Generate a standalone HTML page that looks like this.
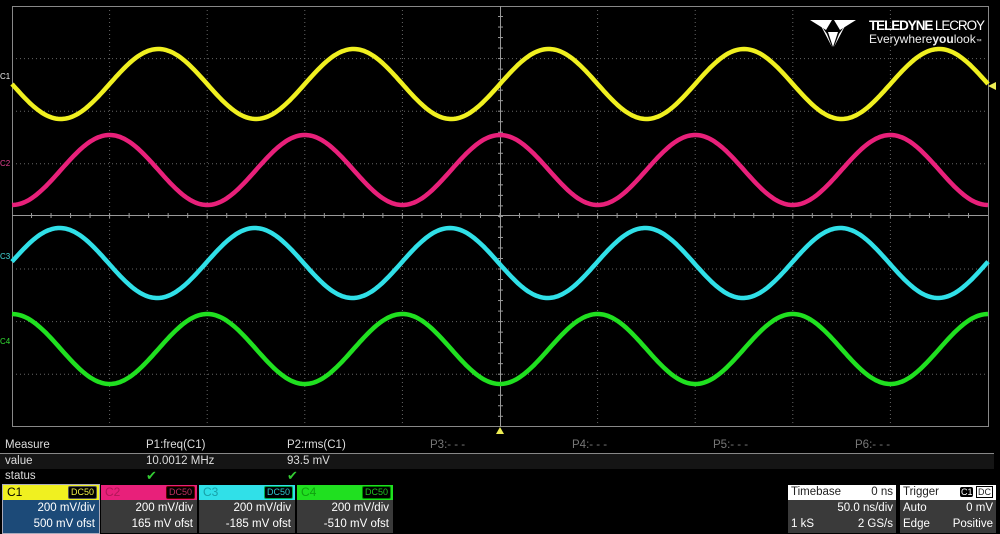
<!DOCTYPE html>
<html><head><style>
body{margin:0;width:1000px;height:534px;background:#000;overflow:hidden;font-family:"Liberation Sans",sans-serif;position:relative}
.t{position:absolute;font-size:11.5px;color:#ddd;white-space:nowrap}
.ch{position:absolute;top:485px;width:96px;height:48px;background:#3a3a3a}
.ch .h{height:15px;font-size:12px;line-height:15px;padding-left:4px;position:relative}
.ch .h b{position:absolute;right:2px;top:1px;font-weight:normal;font-size:9px;line-height:11px;padding:0 2px;border:1px solid #888;border-radius:2px;background:#000}
.ch .v{text-align:right;font-size:11.5px;line-height:16px;color:#fff;padding-right:4px}
</style></head><body>
<svg width="1000" height="534" style="position:absolute;left:0;top:0">
<g id="grid" stroke="#666" stroke-width="1" stroke-dasharray="1,3"></g>
<rect x="12.5" y="6.5" width="976" height="420" fill="none" stroke="#888"/>
<line x1="12" y1="215.5" x2="988" y2="215.5" stroke="#999"/>
<line x1="500.5" y1="6" x2="500.5" y2="427" stroke="#999"/>
<g id="ticks" stroke="#999"></g>
<g id="waves" fill="none" stroke-width="4.5"></g>
<polygon points="496,434 504,434 500,427" fill="#ee5"/>
<polygon points="988,86 996,82 996,90" fill="#ee5"/>
<text x="0" y="79" fill="#eee" font-size="8" font-family="Liberation Sans">C1</text>
<text x="0" y="166" fill="#e04090" font-size="8" font-family="Liberation Sans">C2</text>
<text x="0" y="259" fill="#4dd" font-size="8" font-family="Liberation Sans">C3</text>
<text x="0" y="344" fill="#3d3" font-size="8" font-family="Liberation Sans">C4</text>
<g fill="#fff"><polygon points="810,20 832,20 826,30"/><polygon points="834,20 856,20 840,30"/><polygon points="828,32 838,32 833,47"/><polygon points="820,24 827,34 832,47"/><polygon points="846,24 839,34 834,47"/></g>
<text x="869" y="30" fill="#fff" font-size="13.5" font-weight="bold" font-family="Liberation Sans" textLength="116">TELEDYNE <tspan font-weight="normal">LECROY</tspan></text>
<text x="869" y="43" fill="#eee" font-size="12" font-family="Liberation Sans">Everywhere<tspan font-weight="bold">you</tspan>look<tspan font-size="6">™</tspan></text>
</svg>
<script>
var g=document.getElementById('grid'),s='';
for(var i=1;i<10;i++){var x=12+i*97.6;if(i!=5)s+='<line x1="'+x+'" y1="6" x2="'+x+'" y2="427"/>';}
for(var j=1;j<8;j++){var y=6+j*52.6;if(j!=4)s+='<line x1="12" y1="'+y+'" x2="988" y2="'+y+'"/>';}
g.innerHTML=s;
var t='';
for(var k=1;k<50;k++){var x=12+k*19.52;t+='<line x1="'+x+'" y1="213" x2="'+x+'" y2="218"/>';}
for(var k=1;k<40;k++){var y=6+k*10.52;t+='<line x1="498" y1="'+y+'" x2="503" y2="'+y+'"/>';}
document.getElementById('ticks').innerHTML=t;
function w(c,f){var p='';for(var x=12;x<=988;x+=2)p+=x+','+f(x).toFixed(1)+' ';return '<polyline stroke="'+c+'" points="'+p+'"/>';}
var P=195.2,T=2*Math.PI;
document.getElementById('waves').innerHTML=
w('#f0f020',function(x){return 84+35*Math.sin(T*(x-12)/P)})+
w('#e8207a',function(x){return 170+35*Math.cos(T*(x-12)/P)})+
w('#30e0e8',function(x){return 263-35*Math.cos(T*(x-450)/P)})+
w('#20e020',function(x){return 349+35*Math.cos(T*(x-500)/P)});
</script>
<div class="t" style="left:5px;top:439px">Measure</div>
<div class="t" style="left:146px;top:439px">P1:freq(C1)</div>
<div class="t" style="left:287px;top:439px">P2:rms(C1)</div>
<div class="t" style="left:430px;top:439px;color:#777">P3:- - -</div>
<div class="t" style="left:572px;top:439px;color:#777">P4:- - -</div>
<div class="t" style="left:713px;top:439px;color:#777">P5:- - -</div>
<div class="t" style="left:855px;top:439px;color:#777">P6:- - -</div>
<div style="position:absolute;left:0;top:453px;width:994px;height:1px;background:#888"></div>
<div style="position:absolute;left:0;top:454px;width:994px;height:15px;background:#151515"></div>
<div class="t" style="left:5px;top:455px">value</div>
<div class="t" style="left:146px;top:455px">10.0012 MHz</div>
<div class="t" style="left:287px;top:455px">93.5 mV</div>
<div class="t" style="left:5px;top:470px">status</div>
<div class="t" style="left:146px;top:468px;color:#3c3;font-size:13px">✔</div>
<div class="t" style="left:287px;top:468px;color:#3c3;font-size:13px">✔</div>
<div class="ch" style="left:3px;background:#1c4a78;outline:1px solid #aab"><div class="h" style="background:#f0f020;color:#000">C1<b style="color:#ee4;border-color:#555">DC50</b></div><div class="v">200 mV/div<br>500 mV ofst</div></div>
<div class="ch" style="left:101px"><div class="h" style="background:#e8207a;color:#b01858">C2<b style="color:#c03060;border-color:#600">DC50</b></div><div class="v">200 mV/div<br>165 mV ofst</div></div>
<div class="ch" style="left:199px"><div class="h" style="background:#30e0e8;color:#18a0a8">C3<b style="color:#30c8d0;border-color:#0a5">DC50</b></div><div class="v">200 mV/div<br>-185 mV ofst</div></div>
<div class="ch" style="left:297px"><div class="h" style="background:#20e020;color:#10a010">C4<b style="color:#20c020;border-color:#080">DC50</b></div><div class="v">200 mV/div<br>-510 mV ofst</div></div>
<div style="position:absolute;left:788px;top:485px;width:108px;height:48px;background:#3a3a3a;font-size:11.5px;color:#fff">
<div style="background:#fff;color:#222;height:15px;line-height:15px;padding:0 3px">Timebase<span style="float:right">0 ns</span></div>
<div style="text-align:right;padding-right:3px;line-height:16px">50.0 ns/div</div>
<div style="line-height:16px;padding:0 3px">1 kS<span style="float:right">2 GS/s</span></div></div>
<div style="position:absolute;left:900px;top:485px;width:96px;height:48px;background:#3a3a3a;font-size:11.5px;color:#fff">
<div style="background:#fff;color:#222;height:15px;line-height:15px;padding:0 3px">Trigger<span style="float:right;font-size:9px;line-height:11px;margin-top:2px"><span style="background:#000;color:#fff;padding:0 1px;border-radius:2px">C1</span> <span style="border:1px solid #000;padding:0 1px">DC</span></span></div>
<div style="line-height:16px;padding:0 3px">Auto<span style="float:right">0 mV</span></div>
<div style="line-height:16px;padding:0 3px">Edge<span style="float:right">Positive</span></div></div>
</body></html>
